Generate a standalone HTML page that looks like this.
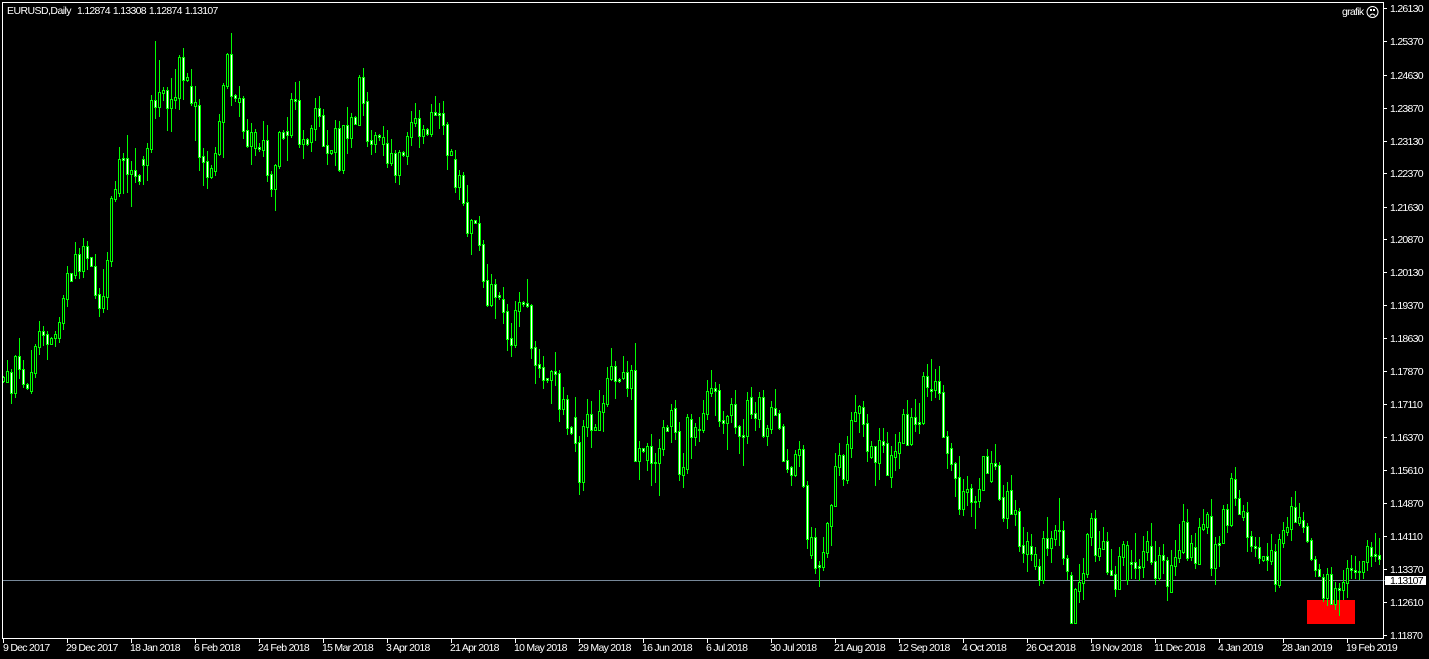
<!DOCTYPE html>
<html><head><meta charset="utf-8"><title>EURUSD,Daily</title>
<style>
html,body{margin:0;padding:0;background:#000;width:1429px;height:659px;overflow:hidden}
#w{position:relative;width:1429px;height:659px;background:#000;overflow:hidden;font-family:"Liberation Sans",sans-serif;color:#fff;font-size:10.5px;letter-spacing:-.72px;line-height:12px;white-space:pre}
#w div{position:absolute}
svg{position:absolute;left:0;top:0}
.p{left:1390px}
.t{top:642px}
</style></head><body><div id="w">
<svg id="s" width="1429" height="659" viewBox="0 0 1429 659" shape-rendering="crispEdges">
<rect x="2" y="580" width="1383" height="1" fill="#778899"/>
<rect x="1307" y="600" width="48" height="24" fill="#ff0000"/>
<g id="c"></g>
<g fill="#fff">
<rect x="2" y="2" width="1382" height="1"/><rect x="2" y="2" width="1" height="637"/><rect x="1383" y="2" width="1" height="637"/><rect x="2" y="638" width="1382" height="1"/>
</g>
<g id="k" fill="#fff"></g>
<circle cx="1372.5" cy="12" r="5.5" fill="none" stroke="#fff" stroke-width="1" shape-rendering="auto"/>
<path d="M1370 9h2v2h-2zM1373 9h2v2h-2z" fill="#fff"/>
<path d="M1369.8 15.5q2.7-3 5.4 0" stroke="#fff" stroke-width="1" fill="none" shape-rendering="auto"/>
<rect x="1385" y="576" width="41" height="9" fill="#fff"/>
</svg>
<div style="left:7px;top:5px;letter-spacing:-.55px">EURUSD,Daily</div>
<div style="left:77px;top:5px;word-spacing:.8px">1.12874 1.13308 1.12874 1.13107</div>
<div style="left:1342px;top:6px">grafik</div>
<div class="p" style="top:3px">1.26130</div>
<div class="p" style="top:36px">1.25370</div>
<div class="p" style="top:70px">1.24630</div>
<div class="p" style="top:103px">1.23870</div>
<div class="p" style="top:136px">1.23130</div>
<div class="p" style="top:168px">1.22370</div>
<div class="p" style="top:202px">1.21630</div>
<div class="p" style="top:234px">1.20870</div>
<div class="p" style="top:267px">1.20130</div>
<div class="p" style="top:300px">1.19370</div>
<div class="p" style="top:333px">1.18630</div>
<div class="p" style="top:366px">1.17870</div>
<div class="p" style="top:399px">1.17110</div>
<div class="p" style="top:432px">1.16370</div>
<div class="p" style="top:465px">1.15610</div>
<div class="p" style="top:498px">1.14870</div>
<div class="p" style="top:531px">1.14110</div>
<div class="p" style="top:564px">1.13370</div>
<div class="p" style="top:575px;color:#000">1.13107</div>
<div class="p" style="top:597px">1.12610</div>
<div class="p" style="top:630px">1.11870</div>
<div class="t" style="left:3px">9 Dec 2017</div>
<div class="t" style="left:66px">29 Dec 2017</div>
<div class="t" style="left:130px">18 Jan 2018</div>
<div class="t" style="left:194px">6 Feb 2018</div>
<div class="t" style="left:258px">24 Feb 2018</div>
<div class="t" style="left:322px">15 Mar 2018</div>
<div class="t" style="left:386px">3 Apr 2018</div>
<div class="t" style="left:450px">21 Apr 2018</div>
<div class="t" style="left:514px">10 May 2018</div>
<div class="t" style="left:578px">29 May 2018</div>
<div class="t" style="left:642px">16 Jun 2018</div>
<div class="t" style="left:706px">6 Jul 2018</div>
<div class="t" style="left:770px">30 Jul 2018</div>
<div class="t" style="left:834px">21 Aug 2018</div>
<div class="t" style="left:898px">12 Sep 2018</div>
<div class="t" style="left:962px">4 Oct 2018</div>
<div class="t" style="left:1026px">26 Oct 2018</div>
<div class="t" style="left:1090px">19 Nov 2018</div>
<div class="t" style="left:1154px">11 Dec 2018</div>
<div class="t" style="left:1218px">4 Jan 2019</div>
<div class="t" style="left:1282px">28 Jan 2019</div>
<div class="t" style="left:1346px">19 Feb 2019</div>
</div>
<script>
var d="376 377 381 382 0;360 371 382 382 0;369 372 393 403 1;355 356 393 397 0;338 356 369 378 1;360 369 384 387 1;383 384 388 389 1;350 372 391 393 0;344 346 373 377 0;321 331 347 354 0;326 331 335 345 1;331 334 344 359 1;337 338 344 344 0;331 334 338 346 0;317 322 338 342 0;295 298 323 329 0;266 273 299 306 0;273 273 281 281 1;242 254 275 278 0;248 254 271 278 1;238 246 271 277 0;241 246 258 269 1;257 257 266 266 1;254 266 295 298 1;288 294 308 316 1;269 296 308 312 0;252 260 297 309 0;196 198 261 266 0;181 189 199 201 0;147 159 193 196 0;153 158 160 193 1;135 158 174 192 1;161 170 174 206 0;148 170 176 182 1;174 175 181 184 1;156 159 165 184 1;143 148 165 180 0;95 100 149 152 0;41 100 107 118 1;60 92 107 116 0;87 90 93 100 0;87 90 108 130 1;78 99 108 131 0;69 97 100 108 0;55 57 98 109 0;48 57 80 99 1;73 77 80 81 0;69 86 103 105 1;86 102 106 140 0;99 105 157 170 1;148 156 162 185 1;151 161 177 188 1;165 168 177 178 0;147 153 171 175 0;114 121 154 155 0;83 85 122 157 0;53 54 86 88 0;33 54 96 105 1;94 95 98 101 1;86 98 102 116 0;96 98 131 138 1;119 130 146 147 1;123 132 146 164 0;129 132 148 155 0;143 147 149 151 1;121 140 150 156 0;125 140 175 181 1;171 174 189 196 1;164 165 189 210 0;131 132 166 168 0;130 132 138 139 1;117 131 135 160 1;93 99 135 137 0;82 99 101 109 1;81 100 144 147 1;130 139 144 158 0;138 139 144 145 1;125 128 142 151 0;98 108 129 140 0;96 108 116 126 1;109 115 146 146 1;130 145 153 164 1;150 150 153 154 0;120 128 152 165 0;121 128 170 171 1;125 125 170 173 0;107 125 138 153 1;113 117 138 147 0;116 117 124 124 1;75 77 125 125 0;68 77 103 115 1;92 101 141 146 1;130 140 144 154 1;132 135 144 152 0;134 135 137 140 1;126 137 144 155 0;130 143 163 167 1;139 153 163 165 0;150 153 175 182 1;150 152 175 184 0;151 152 155 156 1;132 136 156 164 0;111 122 137 145 0;103 118 123 126 0;110 118 136 147 1;125 129 136 143 0;128 129 134 135 1;104 112 134 136 0;96 112 115 115 1;103 113 115 128 1;101 113 125 134 1;122 124 155 169 1;149 151 155 155 0;150 159 187 192 1;170 175 187 199 0;172 175 203 205 1;185 202 233 236 1;219 220 233 254 0;220 220 223 223 1;216 223 245 250 1;240 244 281 287 1;264 280 305 306 1;274 284 305 306 0;279 284 297 318 1;292 295 297 299 1;287 299 312 323 1;304 311 339 350 1;323 338 345 356 1;301 310 345 347 0;292 302 311 326 0;301 302 304 306 1;279 303 306 307 1;304 305 348 358 1;341 347 365 383 1;349 364 368 377 1;356 367 380 388 1;378 378 380 382 1;370 371 380 403 0;352 371 374 385 1;370 373 409 421 1;387 399 409 414 0;395 399 428 434 1;426 427 433 434 1;397 417 443 451 1;436 442 482 494 1;420 426 482 490 0;399 414 427 436 0;401 414 430 447 1;424 427 430 430 0;390 411 430 430 0;395 403 412 431 0;367 378 404 406 0;348 366 379 380 0;361 366 381 398 1;378 379 381 382 1;356 372 378 379 0;361 372 388 396 1;365 370 388 399 0;343 370 461 461 1;441 448 461 479 0;448 448 451 452 1;443 446 460 470 0;434 446 463 485 1;453 462 463 482 1;439 448 463 495 0;420 427 449 455 0;425 427 431 431 1;404 410 426 442 0;400 408 432 439 1;422 431 474 480 1;453 467 475 487 0;414 417 469 473 0;414 419 437 458 1;423 427 437 445 0;417 429 430 441 1;400 413 430 432 0;380 391 414 419 0;370 388 393 396 0;382 388 391 415 1;384 390 421 426 1;411 420 423 433 1;415 416 423 449 0;398 404 415 422 0;390 404 427 433 1;425 426 436 453 1;419 435 437 465 1;392 400 436 443 0;387 397 414 418 1;402 413 418 430 1;392 397 419 427 0;390 397 436 437 1;425 428 436 445 0;401 407 429 433 0;389 408 415 415 1;410 413 428 429 1;424 426 461 461 1;449 460 469 472 1;466 467 475 485 1;450 454 475 476 0;441 449 455 466 0;445 449 486 487 1;481 485 539 548 1;527 537 555 558 0;528 537 568 573 1;561 565 567 586 1;537 552 567 570 0;522 523 553 557 0;504 505 526 545 0;453 466 506 506 0;443 455 467 475 0;454 455 479 485 1;436 444 480 483 0;412 420 448 457 0;395 412 421 421 0;405 406 413 432 0;401 407 424 436 1;414 423 451 461 1;441 446 457 458 0;446 446 462 485 1;428 440 463 479 0;428 441 445 452 1;432 443 475 475 1;446 455 477 487 0;434 451 457 470 0;432 442 453 468 0;409 414 443 443 0;400 414 445 445 1;408 417 444 445 0;399 417 424 431 1;403 422 424 433 1;372 376 423 424 0;364 376 387 396 1;359 389 391 400 1;369 381 390 397 0;366 381 393 399 1;385 392 437 437 1;431 436 453 468 1;443 448 464 470 1;462 463 478 496 1;456 477 509 514 1;479 491 509 515 0;476 489 492 505 0;484 488 502 516 1;496 501 502 528 1;478 489 501 507 0;456 456 490 490 0;449 456 473 473 1;451 463 481 482 0;444 463 466 469 1;462 465 499 500 1;485 497 518 521 1;482 491 518 528 0;475 490 514 514 1;500 510 514 525 0;508 511 546 551 1;527 545 553 562 1;532 541 554 571 0;534 546 554 560 1;547 554 566 569 0;559 566 580 585 1;531 538 580 583 0;517 538 548 555 1;531 538 548 562 0;525 530 539 545 0;498 530 531 545 1;521 530 558 564 1;555 558 571 579 1;572 575 623 623 1;588 589 623 623 0;564 582 591 602 0;558 573 583 599 0;533 534 574 577 0;513 518 537 545 0;510 518 555 561 1;531 548 556 560 0;527 541 549 549 0;532 541 572 574 1;549 570 575 575 1;566 574 589 596 1;547 556 589 589 0;541 544 557 565 0;541 545 580 584 0;550 562 564 578 1;533 562 568 578 1;559 566 568 580 1;536 551 567 577 0;531 541 552 560 0;523 546 562 564 1;541 561 578 584 1;547 555 578 580 0;544 555 560 573 1;557 560 586 600 1;550 565 592 592 0;540 557 566 575 0;524 550 558 562 0;504 521 552 553 0;509 522 558 560 1;535 543 557 560 0;533 547 563 568 1;518 527 564 564 0;509 524 529 530 0;512 514 527 533 0;499 516 568 575 1;537 544 568 584 0;536 543 545 566 1;505 509 543 543 0;504 509 525 532 1;473 478 525 526 0;467 479 498 505 1;490 498 514 514 1;505 511 517 520 0;502 512 537 551 1;531 536 546 551 1;537 546 548 556 1;537 547 558 563 1;556 556 560 561 0;543 556 560 570 1;534 550 561 564 0;544 551 584 591 1;534 539 585 587 0;522 530 543 547 0;517 527 532 535 0;497 506 529 540 0;491 507 522 522 1;503 517 523 525 0;512 520 527 532 1;523 526 541 542 1;538 540 559 560 1;556 559 570 576 1;564 569 576 576 1;574 577 598 601 1;568 574 598 605 0;567 574 604 604 1;582 588 604 609 0;583 588 590 615 1;570 582 590 599 0;560 568 583 597 0;555 568 570 578 1;556 570 572 578 1;561 571 572 579 1;561 561 572 578 0;540 546 562 570 0;542 547 556 566 1;533 554 556 561 1;538 555 559 564 1";
var h="",x=3,a=d.split(";");
for(var i=0;i<a.length;i++){var v=a[i].split(" ").map(Number);var H=v[0],T=v[1],B=v[2],L=v[3];
h+='<rect x="'+x+'" y="'+H+'" width="1" height="'+(L-H+1)+'" fill="#0f0"/>';
h+='<rect x="'+(x-1)+'" y="'+T+'" width="3" height="'+(B-T+1)+'" fill="#0f0"/>';
if(B-T>1)h+='<rect x="'+x+'" y="'+(T+1)+'" width="1" height="'+(B-T-1)+'" fill="'+(v[4]?'#fff':'#000')+'"/>';
x+=4;}
document.getElementById("c").innerHTML=h;
var k="",ys=[8,41,75,108,141,173,207,239,272,305,338,371,404,437,470,503,536,569,602,635];
ys.forEach(function(y){k+='<rect x="1384" y="'+y+'" width="3" height="1"/>';});
for(var t=3;t<1400;t+=64)k+='<rect x="'+t+'" y="639" width="1" height="4"/>';
document.getElementById("k").innerHTML=k;
</script>
</body></html>
